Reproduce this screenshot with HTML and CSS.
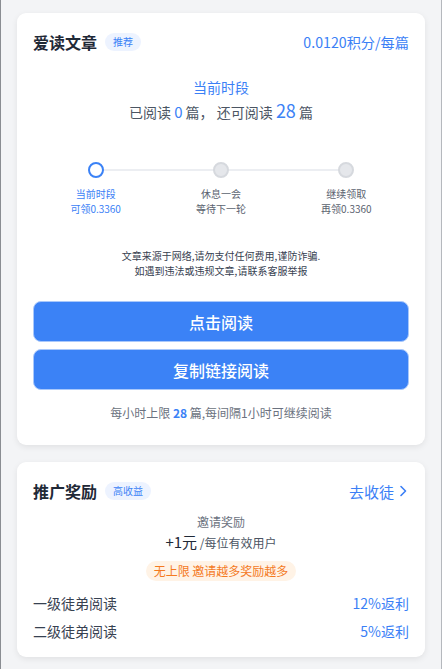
FILE: index.html
```html
<!DOCTYPE html>
<html lang="zh-CN">
<head>
    <meta charset="UTF-8">
    <meta name="viewport" content="width=device-width, initial-scale=1.0">
    <title>爱读文章</title>
    <link rel="stylesheet" href="styles.css">
</head>
<body>
    <div class="page">
        <div class="card">
            <div class="card-head">
                <div class="head-left">
                    <span class="card-title">爱读文章</span>
                    <span class="tag">推荐</span>
                </div>
                <span class="head-right">0.0120积分/每篇</span>
            </div>

            <div class="period">当前时段</div>
            <div class="count">已阅读 <span class="num">0</span> 篇， 还可阅读 <span class="num big">28</span> 篇</div>

            <div class="steps">
                <div class="step active">
                    <span class="dot"></span>
                    <p>当前时段</p>
                    <p>可领0.3360</p>
                </div>
                <div class="step">
                    <span class="dot"></span>
                    <p>休息一会</p>
                    <p>等待下一轮</p>
                </div>
                <div class="step">
                    <span class="dot"></span>
                    <p>继续领取</p>
                    <p>再领0.3360</p>
                </div>
            </div>

            <div class="notice">
                <p>文章来源于网络,请勿支付任何费用,谨防诈骗.</p>
                <p>如遇到违法或违规文章,请联系客服举报</p>
            </div>

            <button class="btn">点击阅读</button>
            <button class="btn">复制链接阅读</button>

            <div class="limit">每小时上限 <b>28</b> 篇,每间隔1小时可继续阅读</div>
        </div>

        <div class="card card-invite">
            <div class="card-head">
                <div class="head-left">
                    <span class="card-title">推广奖励</span>
                    <span class="tag">高收益</span>
                </div>
                <span class="head-right link">去收徒
                    <svg width="8" height="12" viewBox="0 0 8 12"><path d="M2 1.5 L6.5 6 L2 10.5" fill="none" stroke="currentColor" stroke-width="1.6" stroke-linecap="round" stroke-linejoin="round"/></svg>
                </span>
            </div>

            <div class="invite-label">邀请奖励</div>
            <div class="invite-amount"><span class="money">+1元</span> /每位有效用户</div>
            <div class="pill-wrap"><span class="pill">无上限 邀请越多奖励越多</span></div>

            <div class="row">
                <span>一级徒弟阅读</span>
                <span class="rate">12%返利</span>
            </div>
            <div class="row">
                <span>二级徒弟阅读</span>
                <span class="rate">5%返利</span>
            </div>
        </div>
    </div>
</body>
</html>
```

FILE: styles.css
```css
* {
    box-sizing: border-box;
}
body {
    margin: 0;
    font-family: "Noto Sans CJK SC", "Noto Sans", sans-serif;
    background: #f3f4f6;
    color: #1f2937;
}
p {
    margin: 0;
}
.page {
    min-height: 669px;
    padding: 13px 16px 12px 16px;
    border-left: 1px solid #8a8d92;
    border-right: 1px solid #b5b8bd;
    display: flex;
    flex-direction: column;
    gap: 17px;
}
.card {
    background: #fff;
    border-radius: 9px;
    box-shadow: 0 2px 6px rgba(0, 0, 0, 0.08);
    padding: 16px 16px 23px 16px;
    display: flex;
    flex-direction: column;
}
.card-head {
    display: flex;
    justify-content: space-between;
    align-items: center;
    height: 26px;
}
.head-left {
    display: flex;
    align-items: center;
    gap: 8px;
}
.card-title {
    font-size: 16px;
    font-weight: 700;
    color: #1f2937;
}
.tag {
    font-size: 10px;
    color: #3b82f6;
    background: #edf3ff;
    border-radius: 9px;
    padding: 0 8px;
    height: 18px;
    line-height: 18px;
}
.head-right {
    font-size: 14.2px;
    color: #3b7ff6;
}
.link {
    display: flex;
    align-items: center;
    gap: 5px;
    margin-right: 2px;
    font-size: 15px;
}
.period {
    margin-top: 22px;
    text-align: center;
    font-size: 14px;
    line-height: 20px;
    color: #3b7ff6;
}
.count {
    margin-top: 1px;
    text-align: center;
    font-size: 14px;
    line-height: 24px;
    color: #4b5563;
}
.count .num {
    color: #3b82f6;
    font-size: 15px;
}
.count .big {
    font-size: 18px;
}
.steps {
    margin-top: 38px;
    display: grid;
    grid-template-columns: 1fr 1fr 1fr;
    position: relative;
}
.steps::before {
    content: "";
    position: absolute;
    top: 7px;
    left: 16.7%;
    right: 16.7%;
    height: 2px;
    background: #eceef2;
}
.step {
    display: flex;
    flex-direction: column;
    align-items: center;
    font-size: 10px;
    line-height: 15px;
    color: #5b6370;
    position: relative;
}
.dot {
    width: 16px;
    height: 16px;
    border-radius: 50%;
    background: #e5e7eb;
    border: 2px solid #d6d9de;
    margin-bottom: 8px;
}
.step.active {
    color: #3b7ff6;
}
.step.active .dot {
    background: #fff;
    border: 2.5px solid #3b82f6;
}
.notice {
    margin-top: 32px;
    text-align: center;
    font-size: 10px;
    line-height: 15px;
    color: #374151;
}
.btn {
    margin-top: 23px;
    height: 41px;
    border: 1px solid #a9c8fb;
    border-radius: 8px;
    background: #3b82f6;
    color: #fff;
    font-family: inherit;
    font-size: 16px;
    font-weight: 500;
    cursor: pointer;
}
.btn + .btn {
    margin-top: 7px;
}
.limit {
    margin-top: 14px;
    text-align: center;
    font-size: 12px;
    line-height: 18px;
    color: #6b7280;
}
.limit b {
    color: #3b82f6;
}
.card-invite {
    padding-bottom: 15px;
}
.invite-label {
    margin-top: 9px;
    text-align: center;
    font-size: 12px;
    line-height: 18px;
    color: #6b7280;
}
.invite-amount {
    margin-top: 0;
    text-align: center;
    font-size: 12px;
    line-height: 22px;
    color: #4b5563;
}
.money {
    font-size: 15px;
    color: #1f2937;
}
.pill-wrap {
    margin-top: 7px;
    display: flex;
    justify-content: center;
}
.pill {
    height: 20px;
    line-height: 20px;
    padding: 0 8px;
    border-radius: 10px;
    background: #fff3e6;
    color: #f47a1f;
    font-size: 12px;
}
.row {
    margin-top: 11px;
    display: flex;
    justify-content: space-between;
    font-size: 14px;
    line-height: 22px;
    color: #374151;
}
.row + .row {
    margin-top: 6px;
}
.rate {
    color: #3b7ff6;
}
```
